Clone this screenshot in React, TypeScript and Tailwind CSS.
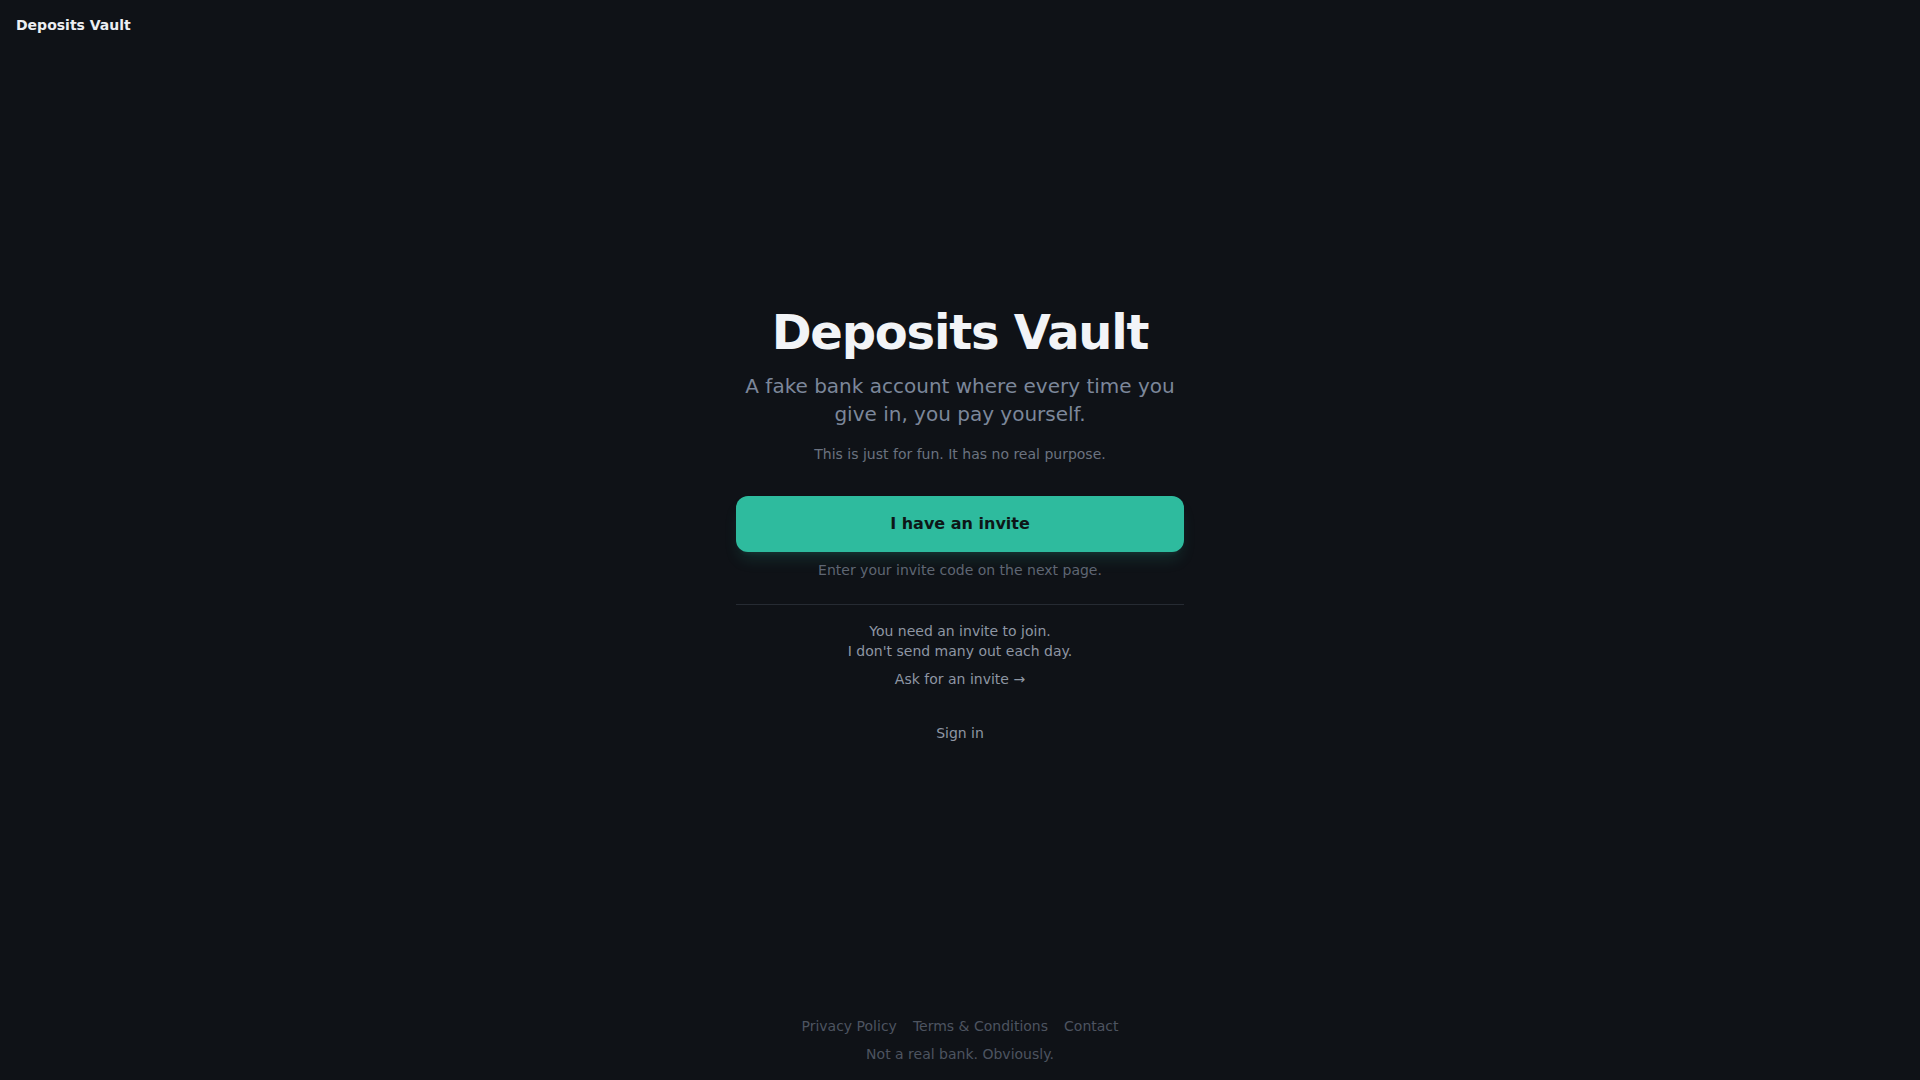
export default function App() {
  return (
    <div
      className="min-h-screen flex flex-col bg-[#0f1217] text-[#e5e7eb]"
      style={{ fontFamily: '"DejaVu Sans", "Liberation Sans", sans-serif' }}
    >
      <header className="h-[50px] px-4 flex items-center">
        <span className="text-sm font-bold text-[#eceef2]">Deposits Vault</span>
      </header>

      <main className="flex-1 flex items-center justify-center px-4">
        <div className="w-full max-w-md flex flex-col items-center text-center">
          <h1 className="text-5xl leading-none font-bold tracking-tight text-[#f2f4f7]">
            Deposits Vault
          </h1>
          <p className="mt-4 text-xl text-[#7c879a] max-w-[440px]">
            A fake bank account where every time you give in, you pay yourself.
          </p>
          <p className="mt-4 text-sm text-[#6b7280]">
            This is just for fun. It has no real purpose.
          </p>

          <button className="mt-8 h-14 w-full rounded-xl bg-[#2ebb9e] text-base font-bold text-[#0d1617] shadow-lg shadow-[#2ebb9e]/15">
            I have an invite
          </button>
          <p className="mt-2 text-sm text-[#5f6673]">
            Enter your invite code on the next page.
          </p>

          <div className="mt-6 w-full border-t border-[#262b33]" />

          <p className="mt-4 text-sm text-[#8e96a3]">
            You need an invite to join.
            <br />
            I don&apos;t send many out each day.
          </p>
          <a href="#" className="mt-2 text-sm text-[#8e96a3]">
            Ask for an invite →
          </a>

          <a href="#" className="mt-[34px] text-sm text-[#8e96a3]">
            Sign in
          </a>
        </div>
      </main>

      <footer className="pt-4 pb-4 text-center text-sm text-[#4d5460]">
        <nav className="flex justify-center gap-4">
          <a href="#">Privacy Policy</a>
          <a href="#">Terms &amp; Conditions</a>
          <a href="#">Contact</a>
        </nav>
        <p className="mt-2">Not a real bank. Obviously.</p>
      </footer>
    </div>
  );
}
